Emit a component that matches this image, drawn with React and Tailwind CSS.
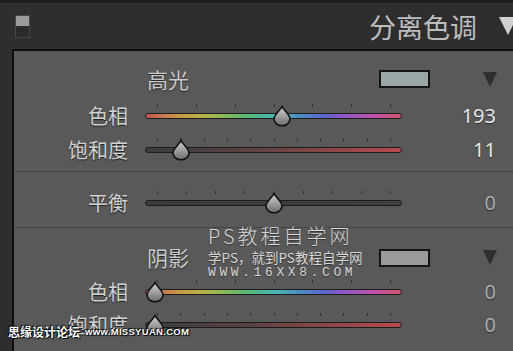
import React from "react";

const cjk = { fontFamily: '"Noto Sans CJK SC", "Noto Sans", sans-serif' };

const hueGradient =
  "linear-gradient(to right, #c4555a 0%, #c98a4c 10%, #c2b04c 20%, #8fbb55 30%, #55b878 40%, #4db5b0 50%, #4b8fc4 60%, #5f64c8 70%, #9a55c4 80%, #c052a6 90%, #d0566a 100%)";
const satGradient = "linear-gradient(to right, #3c3c3c 0%, #5a4242 40%, #b84a4e 100%)";
const balGradient = "linear-gradient(to right, #3b3b3b, #404040)";

const Thumb = ({ left }) => (
  <svg
    className="absolute top-[1px]"
    style={{ left: left - 10 }}
    width="20"
    height="22"
    viewBox="0 0 20 22"
  >
    <defs>
      <linearGradient id="tg" x1="0" y1="0" x2="0" y2="1">
        <stop offset="0" stopColor="#d2d2d2" />
        <stop offset="1" stopColor="#6c6c6c" />
      </linearGradient>
    </defs>
    <path
      d="M10 1.5 C11.5 5 18 9.5 18 14 A8 6.8 0 0 1 2 14 C2 9.5 8.5 5 10 1.5 Z"
      fill="url(#tg)"
      stroke="#111"
      strokeWidth="1.6"
    />
  </svg>
);

const SliderRow = ({ label, value, frac, track, ticks, bright, h }) => {
  const tickList = Array.from({ length: ticks }, (_, i) => 12 + (i * 233) / (ticks - 1));
  return (
    <div className={`flex items-center ${h}`}>
      <div
        className="w-[114px] text-right text-[20px] leading-none text-[#d2d2d2] [text-shadow:0_1px_1px_#1e1e1e]"
        style={cjk}
      >
        {label}
      </div>
      <div className="relative ml-[17px] h-[24px] w-[257px]">
        {tickList.map((x, i) => (
          <div key={i} className="absolute top-0 h-[3px] w-px bg-[#2e2e2e]" style={{ left: x }} />
        ))}
        <div
          className="absolute top-[9px] h-[6px] w-full rounded-full border border-[#1c1c1c]"
          style={{ background: track }}
        />
        <Thumb left={10 + frac * 237} />
      </div>
      <div
        className={`flex-1 pr-[17px] text-right text-[20px] leading-none ${
          bright ? "text-[#e8e8e8]" : "text-[#acacac]"
        } [text-shadow:0_1px_1px_#2a2a2a]`}
        style={{ fontFamily: '"Noto Sans", sans-serif' }}
      >
        {value}
      </div>
    </div>
  );
};

const SectionHead = ({ title, swatch, h }) => (
  <div className={`flex items-center pl-[133px] pr-[16px] ${h}`}>
    <div className="text-[21px] leading-none text-[#cbcbcb] [text-shadow:0_1px_1px_#222]" style={cjk}>
      {title}
    </div>
    <div className={`ml-auto h-[18px] w-[51px] border-2 border-[#151515] ${swatch}`} />
    <svg className="ml-[53px]" width="14" height="15" viewBox="0 0 14 15">
      <polygon points="0,0 14,0 7,15" fill="#2f2f2f" />
    </svg>
  </div>
);

export default function App() {
  return (
    <div className="relative h-[351px] w-[513px] overflow-hidden bg-[#2e2e2e]">
      <div className="flex h-[49px] items-center border-t-[3px] border-[#1d1d1d] pl-[15px]">
        <div className="flex h-[23px] w-[15px] flex-col border border-[#444] bg-[#2a2a2a]">
          <div className="h-[10px] bg-[#9c9c9c]" />
        </div>
        <div className="ml-auto text-[27px] leading-none text-[#bdbdbd]" style={cjk}>
          分离色调
        </div>
        <svg className="ml-[22px] mr-[-4px] shrink-0" width="18" height="18" viewBox="0 0 18 18">
          <polygon points="0,0 18,0 9,18" fill="#d0d0d0" />
        </svg>
      </div>

      <div className="ml-[12px] h-[302px] border-l-2 border-t-2 border-[#0e0e0e] bg-[#595959]">
        <div className="border-b border-[#464646] pb-[4px]">
          <div className="pt-[8px]">
            <SectionHead title="高光" swatch="bg-[#9ba7a7]" h="h-[40px]" />
          </div>
          <SliderRow label="色相" value="193" frac={193 / 360} track={hueGradient} ticks={7} bright h="h-[34px]" />
          <SliderRow label="饱和度" value="11" frac={0.11} track={satGradient} ticks={11} bright h="h-[34px]" />
        </div>

        <div className="flex h-[56px] items-center border-b border-[#464646] pt-[6px]">
          <div className="w-full">
            <SliderRow label="平衡" value="0" frac={0.5} track={balGradient} ticks={9} h="h-[34px]" />
          </div>
        </div>

        <div>
          <div className="pt-[12px]">
            <SectionHead title="阴影" swatch="bg-[#9a9a9a]" h="h-[35px]" />
          </div>
          <SliderRow label="色相" value="0" frac={0} track={hueGradient} ticks={7} h="h-[34px]" />
          <SliderRow label="饱和度" value="0" frac={0} track={satGradient} ticks={11} h="h-[32px]" />
        </div>
      </div>

      <div className="pointer-events-none absolute left-[208px] top-[224px] flex flex-col text-[#d6d6d6]" style={cjk}>
        <div className="text-[20px] font-light leading-[24px] tracking-[3px] [text-shadow:0_1px_1px_#333]">
          PS教程自学网
        </div>
        <div className="mt-[1px] text-[13.5px] leading-[16px] [text-shadow:0_1px_1px_#333]">
          学PS，就到PS教程自学网
        </div>
        <div
          className="text-[13px] leading-[16px] tracking-[3.6px] [text-shadow:0_1px_1px_#333]"
          style={{ fontFamily: '"Liberation Mono", monospace' }}
        >
          WWW.16XX8.COM
        </div>
      </div>

      <div className="pointer-events-none absolute left-[8px] top-[326px] flex items-center gap-[5px] text-white [text-shadow:0_0_1px_#000,1px_1px_1px_#000,-1px_-1px_1px_#000]">
        <span className="text-[12px] font-bold leading-none" style={cjk}>
          思缘设计论坛
        </span>
        <span
          className="text-[9.5px] font-bold leading-none tracking-[0.3px]"
          style={{ fontFamily: '"Liberation Sans", sans-serif' }}
        >
          www.MISSYUAN.COM
        </span>
      </div>
    </div>
  );
}
